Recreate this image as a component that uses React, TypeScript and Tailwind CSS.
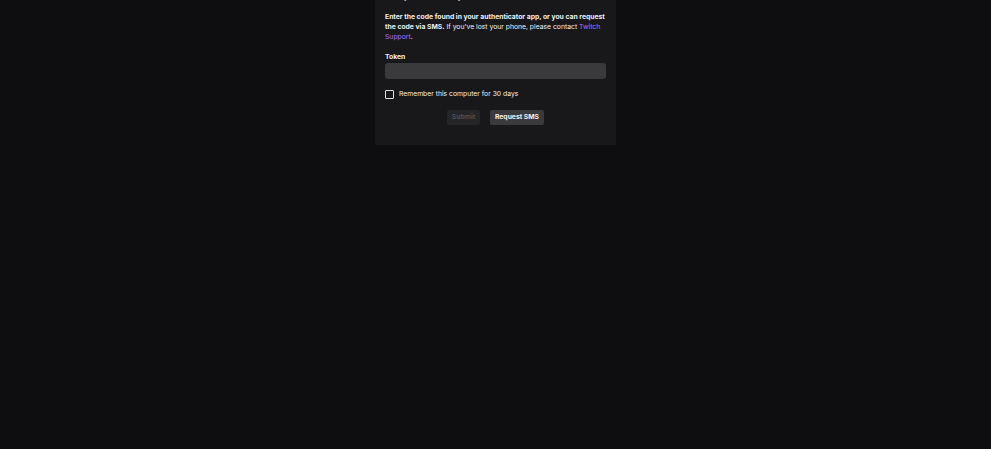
import React, { useState } from "react";

export default function App() {
  const [remember, setRemember] = useState(false);
  const [token, setToken] = useState("");

  return (
    <div
      className="min-h-screen w-full bg-[#0e0e10] flex justify-center overflow-hidden"
      style={{ fontFamily: "Inter, 'Liberation Sans', sans-serif" }}
    >
      <div className="w-[241px] -mt-[8px] h-[153px] bg-[#18181b] px-[10px] text-[#efeff1]">
        {/* heading, mostly scrolled out of view */}
        <p className="text-[6.8px] leading-[10px] font-semibold">
          Enter your 2FA security code
        </p>

        <p className="mt-[10px] text-[6.8px] leading-[10px]">
          <span className="font-bold">
            Enter the code found in your authenticator app, or you can request the code via SMS.
          </span>{" "}
          If you've lost your phone, please contact{" "}
          <a href="#" className="text-[#a970ff]">
            Twitch Support
          </a>
          .
        </p>

        <label className="block mt-[10px] text-[6.8px] leading-[10px] font-bold">Token</label>
        <input
          value={token}
          onChange={(e) => setToken(e.target.value)}
          className="block mt-[1px] w-full h-[16px] rounded-[3px] bg-[#3a3a3d] outline-none text-[8px] px-[4px]"
        />

        <label className="flex items-center gap-[5px] mt-[10px] text-[6.8px] leading-[10px]">
          <input
            type="checkbox"
            checked={remember}
            onChange={() => setRemember(!remember)}
            className="appearance-none w-[9px] h-[9px] border border-[#dedee3] rounded-[1px] bg-transparent"
          />
          Remember this computer for 30 days
        </label>

        <div className="flex justify-center gap-[10px] mt-[11px]">
          <button
            disabled
            className="h-[15px] w-[33px] rounded-[2px] bg-[#252528] text-[#4f4f54] text-[6.8px] font-bold"
          >
            Submit
          </button>
          <button className="h-[15px] w-[54px] rounded-[2px] bg-[#3a3a3d] text-[#efeff1] text-[6.8px] font-bold">
            Request SMS
          </button>
        </div>
      </div>
    </div>
  );
}
